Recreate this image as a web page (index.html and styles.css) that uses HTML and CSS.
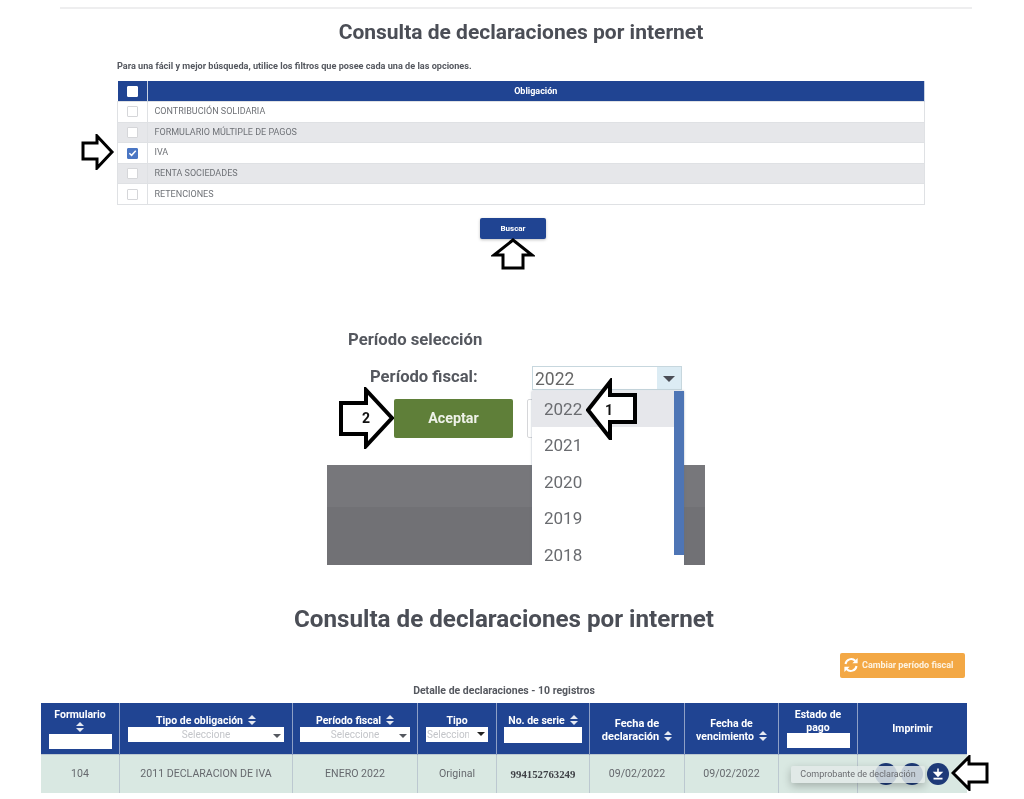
FILE: index.html
```html
<!DOCTYPE html>
<html lang="es">

<head>
  <meta http-equiv="Content-Type" content="text/html; charset=UTF-8">
  <title>Consulta de declaraciones por internet</title>
  <link rel="stylesheet" href="styles.css">
</head>

<body>
  <svg class="defs" width="0" height="0">
    <symbol id="sort" viewBox="0 0 8 10">
      <path d="M4 0 8 4H0zM0 6h8l-4 4z" fill="currentColor"></path>
    </symbol>
  </svg>

  <hr class="top-rule">

  <section class="search">
    <h1 class="title">Consulta de declaraciones por internet</h1>
    <p class="hint">Para una fácil y mejor búsqueda, utilice los filtros que posee cada una de las opciones.</p>
    <table class="oblig">
      <thead>
        <tr>
          <th class="oblig-check"><span class="check check-head"></span></th>
          <th>Obligación</th>
        </tr>
      </thead>
      <tbody>
        <tr>
          <td class="oblig-check"><span class="check"></span></td>
          <td>CONTRIBUCIÓN SOLIDARIA</td>
        </tr>
        <tr class="alt">
          <td class="oblig-check"><span class="check"></span></td>
          <td>FORMULARIO MÚLTIPLE DE PAGOS</td>
        </tr>
        <tr>
          <td class="oblig-check">
            <span class="check check-on">
              <svg viewBox="0 0 10 10" width="10" height="10"><path d="M1.5 5.2 4 7.6 8.6 2.4" fill="none" stroke="#fff" stroke-width="1.6"></path></svg>
            </span>
          </td>
          <td>IVA</td>
        </tr>
        <tr class="alt">
          <td class="oblig-check"><span class="check"></span></td>
          <td>RENTA SOCIEDADES</td>
        </tr>
        <tr>
          <td class="oblig-check"><span class="check"></span></td>
          <td>RETENCIONES</td>
        </tr>
      </tbody>
    </table>
    <button class="btn-search" type="button">Buscar</button>
  </section>

  <section class="period">
    <h2 class="period-title">Período selección</h2>
    <div class="period-row">
      <label class="period-label">Período fiscal:</label>
      <div class="period-select">
        <span>2022</span>
        <span class="period-caret"></span>
      </div>
    </div>
    <div class="period-actions">
      <button class="btn-accept" type="button">Aceptar</button>
      <button class="btn-other" type="button"></button>
    </div>
    <div class="grey-block"></div>
    <div class="dropdown">
      <ul class="dropdown-list">
        <li class="active">2022</li>
        <li>2021</li>
        <li>2020</li>
        <li>2019</li>
        <li>2018</li>
      </ul>
      <div class="dropdown-bar"></div>
    </div>
  </section>

  <section class="results">
    <h1 class="title title-big">Consulta de declaraciones por internet</h1>
    <div class="results-tools">
      <button class="btn-change" type="button">
        <svg viewBox="0 0 16 16" width="16" height="16">
          <path d="M2.5 7A5.7 5.7 0 0 1 12.4 4" fill="none" stroke="#fff" stroke-width="2"></path>
          <path d="M14.6 1v5.2H9.4z" fill="#fff"></path>
          <path d="M13.5 9A5.7 5.7 0 0 1 3.6 12" fill="none" stroke="#fff" stroke-width="2"></path>
          <path d="M1.4 15V9.8h5.2z" fill="#fff"></path>
        </svg>
        Cambiar período fiscal
      </button>
    </div>
    <div class="results-caption">Detalle de declaraciones - 10 registros</div>
    <table class="decl">
      <thead>
        <tr>
          <th class="c-form">Formulario<svg class="sort sort-block"><use href="#sort"></use></svg><input class="field" type="text"></th>
          <th class="c-type">Tipo de obligación<svg class="sort"><use href="#sort"></use></svg>
            <div class="fake-select"><span>Seleccione</span><i></i></div>
          </th>
          <th class="c-period">Período fiscal<svg class="sort"><use href="#sort"></use></svg>
            <div class="fake-select"><span>Seleccione</span><i></i></div>
          </th>
          <th class="c-kind">Tipo
            <div class="fake-select fake-select-small"><span>Seleccione</span><i></i></div>
          </th>
          <th class="c-serial">No. de serie<svg class="sort"><use href="#sort"></use></svg><input class="field" type="text"></th>
          <th class="c-date">Fecha de<br>declaración<svg class="sort"><use href="#sort"></use></svg></th>
          <th class="c-date2">Fecha de<br>vencimiento<svg class="sort"><use href="#sort"></use></svg></th>
          <th class="c-state">Estado de<br>pago<input class="field field-up" type="text"></th>
          <th class="c-print">Imprimir</th>
        </tr>
      </thead>
      <tbody>
        <tr>
          <td>104</td>
          <td>2011 DECLARACION DE IVA</td>
          <td>ENERO 2022</td>
          <td>Original</td>
          <td class="serial">994152763249</td>
          <td>09/02/2022</td>
          <td>09/02/2022</td>
          <td></td>
          <td class="print-cell">
            <div class="print-icons">
              <span class="round"></span>
              <span class="round"></span>
              <span class="round">
                <svg viewBox="0 0 14 14" width="14" height="14"><path d="M7 1.5v5M3.6 5.6h6.8L7 9.2zM2.5 11.6h9" fill="#fff" stroke="#fff" stroke-width="1.6"></path></svg>
              </span>
            </div>
          </td>
        </tr>
      </tbody>
    </table>
  </section>

  <div class="tooltip">Comprobante de declaración</div>

  <!-- flechas sobre la captura -->
  <svg class="arrow arrow-iva" viewBox="0 0 34 36" width="34" height="36"><path d="M2 9H16V2L31 18 16 34V25H2z"></path></svg>
  <svg class="arrow arrow-search" viewBox="0 0 44 32" width="44" height="32"><path d="M22 2 41 17H32V30H12V17H3z"></path></svg>
  <svg class="arrow arrow-two" viewBox="0 0 56 62" width="56" height="62"><path d="M3 16H28V3L54 31 28 59V47H3z"></path><text x="28" y="36">2</text></svg>
  <svg class="arrow arrow-one" viewBox="0 0 52 62" width="52" height="62"><path d="M2 32 24 4V17H49V44H24V60z"></path><text x="23" y="37">1</text></svg>
  <svg class="arrow arrow-print" viewBox="0 0 38 36" width="38" height="36"><path d="M2 18 18 2V9H36V27H18V34z"></path></svg>
</body>

</html>
```

FILE: styles.css
```css
html,
body {
  margin: 0;
  padding: 0;
}

body {
  position: relative;
  height: 799px;
  overflow: hidden;
  padding-top: 7px;
  box-sizing: border-box;
  background: #fff;
  font-family: Roboto, Arial, sans-serif;
  color: #555;
  filter: blur(0.45px);
}

.defs {
  position: absolute;
}

.top-rule {
  border: 0;
  height: 2px;
  background: #eeeeef;
  margin: 0 52px 0 60px;
}

.title {
  margin: 11px 0 0 0;
  text-align: center;
  font-size: 21px;
  line-height: 24px;
  font-weight: 700;
  color: #4b4e56;
}

.search {
  padding: 0 99px 0 117px;
}

.search .title {
  margin-left: -117px;
  margin-right: -99px;
  padding-left: 18px;
}

.hint {
  margin: 16px 0 9px 0;
  font-size: 9.15px;
  line-height: 12px;
  font-weight: 700;
  color: #55585f;
}

.oblig {
  width: 808px;
  border-collapse: collapse;
  table-layout: fixed;
  font-size: 9px;
  color: #6f7277;
}

.oblig th {
  height: 20px;
  padding: 0;
  background: #204492;
  color: #fff;
  font-weight: 700;
  border-right: 1px solid #c9d2e2;
}

.oblig td {
  height: 20.6px;
  padding: 0 0 1px 7px;
  box-sizing: border-box;
  border: 1px solid #dfe1e4;
}

.oblig .alt td {
  background: #e6e7ea;
}

.oblig .oblig-check {
  width: 29px;
  padding: 0;
  text-align: center;
}

.check {
  display: inline-flex;
  align-items: center;
  justify-content: center;
  box-sizing: border-box;
  width: 11px;
  height: 11px;
  vertical-align: middle;
  background: #fff;
  border: 1px solid #d5d6d9;
  border-radius: 1px;
}

.check-head {
  border-color: #fff;
}

.check-on {
  background: #4a76c4;
  border-color: #4a76c4;
}

.btn-search {
  display: block;
  width: 66px;
  height: 21px;
  margin: 13px 0 0 363px;
  padding: 0;
  border: 0;
  border-radius: 2px;
  background: #204492;
  box-shadow: 0 1px 3px rgba(0, 0, 0, 0.25);
  color: #fff;
  font-family: inherit;
  font-size: 8px;
  font-weight: 700;
}

.period {
  position: relative;
  padding-top: 91px;
}

.period-title {
  margin: 0 0 0 348px;
  font-size: 16.7px;
  line-height: 20px;
  font-weight: 700;
  color: #55585f;
}

.period-row {
  display: flex;
  align-items: center;
  margin: 16px 0 0 370px;
  height: 24px;
}

.period-label {
  width: 162px;
  margin-top: -3px;
  font-size: 16.6px;
  font-weight: 700;
  color: #55585f;
}

.period-select {
  display: flex;
  box-sizing: border-box;
  width: 150px;
  height: 24px;
  justify-content: space-between;
  border: 1px solid #c7d7de;
  padding-left: 2px;
  font-size: 17.5px;
  line-height: 24px;
  color: #666;
}

.period-caret {
  position: relative;
  width: 24px;
  background: #dcecf4;
}

.period-caret::after {
  content: "";
  position: absolute;
  left: 6px;
  top: 9px;
  border: 6px solid transparent;
  border-top: 6px solid #4a4d55;
  border-bottom: 0;
}

.period-actions {
  display: flex;
  gap: 14px;
  margin: 9px 0 0 394px;
}

.btn-accept {
  width: 119px;
  height: 39px;
  padding: 0;
  border: 0;
  border-radius: 2px;
  background: #5f7f39;
  color: #eef1e8;
  font-family: inherit;
  font-size: 14.3px;
  font-weight: 700;
}

.btn-other {
  width: 60px;
  height: 39px;
  padding: 0;
  border: 1px solid #d5d6d9;
  border-radius: 2px;
  background: #fff;
}

.grey-block {
  width: 378px;
  height: 100px;
  margin: 27px 0 0 327px;
  background: linear-gradient(#77777b 42%, #717175 42%);
}

.dropdown {
  position: absolute;
  left: 532px;
  bottom: 0;
  width: 152px;
  height: 174px;
  overflow: hidden;
  background: #fff;
  box-shadow: 0 0 2px rgba(90, 110, 130, 0.5);
  clip-path: inset(-3px -3px 0 -3px);
}

.dropdown-list {
  list-style: none;
  margin: 0;
  padding: 0;
  font-size: 17px;
  color: #6a6c70;
}

.dropdown-list li {
  height: 36.4px;
  line-height: 37px;
  padding-left: 12px;
}

.dropdown-list .active {
  background: #e6e7eb;
}

.dropdown-bar {
  position: absolute;
  right: 0;
  top: 0;
  width: 10px;
  height: 164px;
  background: #4e75b5;
}

.title-big {
  margin-top: 40px;
  padding-right: 16px;
  font-size: 24.2px;
  line-height: 28px;
}

.results-tools {
  display: flex;
  justify-content: flex-end;
  margin: 20px 59px 0 0;
}

.btn-change {
  display: flex;
  align-items: center;
  gap: 3px;
  box-sizing: border-box;
  width: 125px;
  height: 25px;
  padding: 0 0 0 3px;
  border: 0;
  border-radius: 2px;
  background: #f3a845;
  color: #fdf3e2;
  font-family: inherit;
  font-size: 9px;
  font-weight: 700;
  white-space: nowrap;
}

.results-caption {
  margin-top: 6px;
  padding-right: 16px;
  text-align: center;
  font-size: 10.5px;
  line-height: 14px;
  font-weight: 700;
  color: #55585f;
}

.decl {
  width: 926px;
  margin: 5px 0 0 41px;
  border-collapse: collapse;
  table-layout: fixed;
  font-size: 10.6px;
  color: #66696e;
}

.decl th {
  height: 51px;
  padding: 0;
  background: #204492;
  color: #fff;
  font-size: 10.5px;
  line-height: 13px;
  font-weight: 700;
  text-align: center;
  border-right: 1px solid #8ea0c6;
}

.decl td {
  height: 38px;
  padding: 0;
  background: #d9e8e2;
  text-align: center;
  border-right: 1px solid #bcc8d0;
  border-top: 1px solid #bcc8d0;
}

.decl th:last-child,
.decl td:last-child {
  border-right: 0;
}

.c-form { width: 78px; }
.c-type { width: 172px; }
.c-period { width: 124px; }
.c-kind { width: 78px; }
.c-serial { width: 92px; }
.c-date { width: 94px; }
.c-date2 { width: 93px; }
.c-state { width: 78px; }

.decl .c-date {
  font-size: 11px;
  height: 47px;
  padding-top: 4px;
}

.decl .c-date2 {
  height: 47px;
  padding-top: 4px;
}

.sort {
  width: 8px;
  height: 10px;
  margin-left: 5px;
  vertical-align: -1px;
  color: #e5e9f2;
}

.sort-block {
  display: block;
  margin: 1px auto 2px auto;
}

.field {
  display: block;
  box-sizing: border-box;
  width: 63px;
  height: 15px;
  margin: 0 auto;
  padding: 0;
  border: 0;
  background: #fff;
}

.field-up {
  margin-top: -1px;
}

.c-serial .field {
  width: 78px;
  height: 16px;
}

.fake-select {
  display: flex;
  align-items: center;
  justify-content: center;
  position: relative;
  height: 15px;
  margin: 0 8px;
  background: #fff;
  color: #c3c5c9;
  font-weight: 400;
  font-size: 10px;
  overflow: hidden;
}

.fake-select i {
  position: absolute;
  right: 3px;
  top: 7px;
  border: 4px solid transparent;
  border-top: 4px solid #55585f;
  border-bottom: 0;
}

.c-period .fake-select {
  margin: 0 7px;
}

.fake-select-small {
  justify-content: flex-start;
  margin: 0 8px;
  padding-left: 1px;
}

.fake-select-small span {
  width: 42px;
  overflow: hidden;
  white-space: nowrap;
}

.fake-select-small i {
  top: 5px;
  color: #222;
  border-top-color: #222;
}

.decl .serial {
  font-family: "Liberation Serif", serif;
  font-weight: 700;
  font-size: 10.8px;
  color: #3f4146;
}

.print-icons {
  display: flex;
  justify-content: flex-end;
  gap: 4px;
  padding-right: 18px;
}

.round {
  display: flex;
  align-items: center;
  justify-content: center;
  width: 22px;
  height: 22px;
  border-radius: 50%;
  background: #1e3a78;
}

.tooltip {
  position: absolute;
  left: 791px;
  top: 766px;
  width: 134px;
  height: 17px;
  border-radius: 2px;
  background: rgba(226, 233, 232, 0.85);
  box-shadow: 0 3px 8px rgba(0, 0, 0, 0.25);
  text-align: center;
  font-size: 9px;
  line-height: 17px;
  color: #6a6c70;
}

.arrow {
  position: absolute;
}

.arrow path {
  fill: #fff;
  stroke: #000;
  stroke-width: 3;
}

.arrow text {
  font-family: Roboto, Arial, sans-serif;
  font-size: 14px;
  font-weight: 700;
  text-anchor: middle;
  fill: #111;
}

.arrow-iva { left: 81px; top: 134px; }
.arrow-search { left: 491px; top: 238px; }
.arrow-two { left: 338px; top: 387px; }
.arrow-one { left: 586px; top: 378px; }
.arrow-print { left: 951px; top: 755px; }

.arrow-one path,
.arrow-two path {
  stroke-width: 4;
}
```
